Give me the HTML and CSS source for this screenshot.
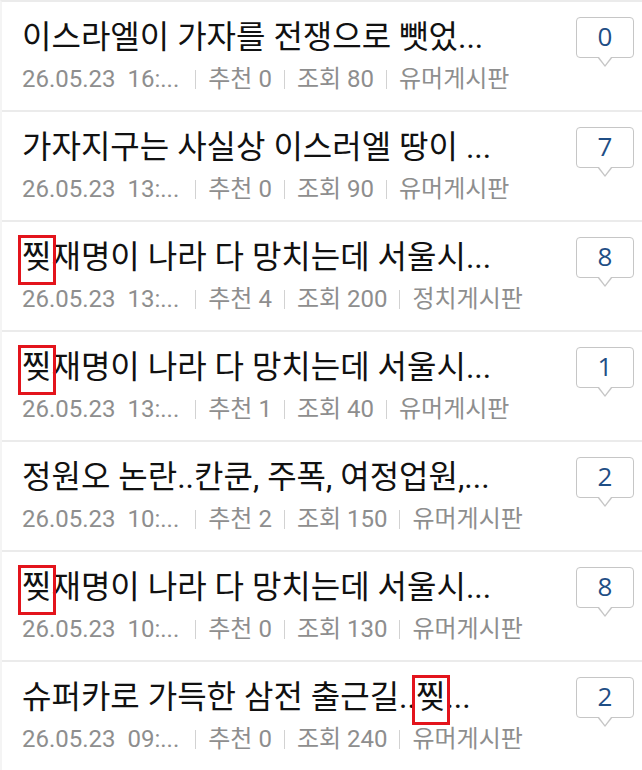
FILE: index.html
```html
<!DOCTYPE html>
<html lang="ko">
<head>
<meta charset="utf-8">
<title>게시판</title>
<link rel="stylesheet" href="styles.css">
</head>
<body>
<ul class="list">
  <li class="item">
    <div class="main">
      <div class="title">이스라엘이 가자를 전쟁으로 뺏었...</div>
      <div class="meta"><span class="date">26.05.23&nbsp;&nbsp;16:...</span><span class="sep"></span><span>추천 0</span><span class="sep"></span><span>조회 80</span><span class="sep"></span><span>유머게시판</span></div>
    </div>
    <div class="bubble">0</div>
  </li>
  <li class="item">
    <div class="main">
      <div class="title">가자지구는 사실상 이스러엘 땅이 ...</div>
      <div class="meta"><span class="date">26.05.23&nbsp;&nbsp;13:...</span><span class="sep"></span><span>추천 0</span><span class="sep"></span><span>조회 90</span><span class="sep"></span><span>유머게시판</span></div>
    </div>
    <div class="bubble">7</div>
  </li>
  <li class="item">
    <div class="main">
      <div class="title"><span class="mark">찢</span>재명이 나라 다 망치는데 서울시...</div>
      <div class="meta"><span class="date">26.05.23&nbsp;&nbsp;13:...</span><span class="sep"></span><span>추천 4</span><span class="sep"></span><span>조회 200</span><span class="sep"></span><span>정치게시판</span></div>
    </div>
    <div class="bubble">8</div>
  </li>
  <li class="item">
    <div class="main">
      <div class="title"><span class="mark">찢</span>재명이 나라 다 망치는데 서울시...</div>
      <div class="meta"><span class="date">26.05.23&nbsp;&nbsp;13:...</span><span class="sep"></span><span>추천 1</span><span class="sep"></span><span>조회 40</span><span class="sep"></span><span>유머게시판</span></div>
    </div>
    <div class="bubble">1</div>
  </li>
  <li class="item">
    <div class="main">
      <div class="title">정원오 논란..칸쿤, 주폭, 여정업원,...</div>
      <div class="meta"><span class="date">26.05.23&nbsp;&nbsp;10:...</span><span class="sep"></span><span>추천 2</span><span class="sep"></span><span>조회 150</span><span class="sep"></span><span>유머게시판</span></div>
    </div>
    <div class="bubble">2</div>
  </li>
  <li class="item">
    <div class="main">
      <div class="title"><span class="mark">찢</span>재명이 나라 다 망치는데 서울시...</div>
      <div class="meta"><span class="date">26.05.23&nbsp;&nbsp;10:...</span><span class="sep"></span><span>추천 0</span><span class="sep"></span><span>조회 130</span><span class="sep"></span><span>유머게시판</span></div>
    </div>
    <div class="bubble">8</div>
  </li>
  <li class="item">
    <div class="main">
      <div class="title">슈퍼카로 가득한 삼전 출근길..<span class="mark">찢</span>...</div>
      <div class="meta"><span class="date">26.05.23&nbsp;&nbsp;09:...</span><span class="sep"></span><span>추천 0</span><span class="sep"></span><span>조회 240</span><span class="sep"></span><span>유머게시판</span></div>
    </div>
    <div class="bubble">2</div>
  </li>
</ul>
</body>
</html>
```
FILE: styles.css
```css
html, body {
  margin: 0;
  padding: 0;
  background: #fff;
}
body {
  font-family: Roboto, "Noto Sans CJK KR", sans-serif;
  overflow: hidden;
}
.list {
  list-style: none;
  margin: 0;
  padding: 0;
  border-top: 2px solid #ebebeb;
  border-left: 2px solid #f4f4f4;
}
.item {
  display: flex;
  height: 108px;
  border-bottom: 2px solid #ebebeb;
}
.main {
  flex: 1;
  min-width: 0;
  padding: 15px 0 0 20px;
}
.title {
  font-size: 32px;
  line-height: 40px;
  color: #111;
  white-space: nowrap;
}
.mark {
  position: relative;
}
.mark::after {
  content: "";
  position: absolute;
  left: -4px;
  right: -5px;
  top: -3px;
  bottom: -9px;
  border: 3px solid #e3141c;
}
.meta {
  display: flex;
  align-items: center;
  margin-top: 7px;
  font-size: 24px;
  line-height: 30px;
  color: #8e8e8e;
  white-space: nowrap;
}
.date {
  margin-right: 4px;
}
.sep {
  width: 1px;
  height: 19px;
  background: #d2d2d2;
  margin: 0 12px;
}
.bubble {
  position: relative;
  box-sizing: border-box;
  width: 58px;
  height: 41px;
  margin: 15px 8px 0 0;
  border: 1.5px solid #c6c6c6;
  border-radius: 4px;
  text-align: center;
  font-family: "Open Sans", Roboto, sans-serif;
  font-size: 26px;
  line-height: 37px;
  color: #1f4e85;
}
.bubble::before,
.bubble::after {
  content: "";
  position: absolute;
  left: 50%;
  width: 0;
  height: 0;
  border-style: solid;
  border-color: transparent;
}
.bubble::before {
  bottom: -10px;
  margin-left: -8px;
  border-width: 10px 8px 0 8px;
  border-top-color: #c6c6c6;
}
.bubble::after {
  bottom: -7.5px;
  margin-left: -6.5px;
  border-width: 8px 6.5px 0 6.5px;
  border-top-color: #fff;
}
```
